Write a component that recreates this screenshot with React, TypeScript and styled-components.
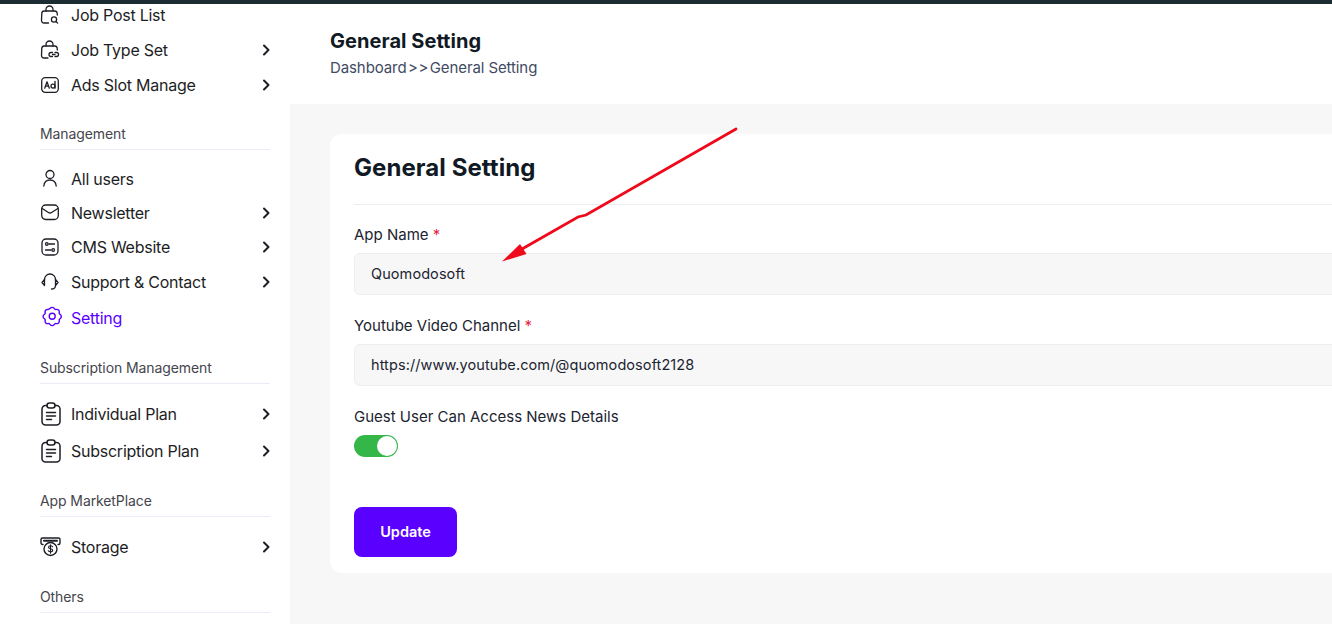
import * as React from 'react'
import styled, { createGlobalStyle } from 'styled-components'

const GlobalStyle = createGlobalStyle`
  html, body {
    margin: 0;
    padding: 0;
    height: 100%;
    overflow: hidden;
    background: #fff;
    font-family: Inter, "Noto Sans", sans-serif;
  }
  * { box-sizing: border-box; }
`

const iconProps = {
  width: 20,
  height: 20,
  viewBox: '0 0 20 20',
  fill: 'none',
  stroke: 'currentColor',
  strokeWidth: 1.3,
  strokeLinecap: 'round' as const,
  strokeLinejoin: 'round' as const
}

const BagSearch = () => (
  <svg {...iconProps}>
    <path d="M8.5 18H4a2.5 2.5 0 0 1-2.5-2.6l.3-7A2.5 2.5 0 0 1 4.300 6h10.400a2.500 2.500 0 0 1 2.500 2.300l.1 1.700" />
    <path d="M6 6V4.500a3.500 3.500 0 0 1 7 0V6" />
    <circle cx="14" cy="14.500" r="2.600" />
    <path d="M16 16.500l1.600 1.600" />
  </svg>
)

const BagLink = () => (
  <svg {...iconProps}>
    <path d="M8 18H4a2.500 2.500 0 0 1-2.500-2.600l.3-7A2.500 2.500 0 0 1 4.300 6h10.400a2.500 2.500 0 0 1 2.500 2.300l.1 1.700" />
    <path d="M6 6V4.500a3.500 3.500 0 0 1 7 0V6" />
    <path d="M12.500 12.500h-1.500a2 2 0 0 0 0 4h1.500M15 12.500h1.500a2 2 0 0 1 0 4H15M12.500 14.500H15" />
  </svg>
)

const AdsIcon = () => (
  <svg {...iconProps}>
    <rect x="1.700" y="2.700" width="16.600" height="14.600" rx="3.500" />
    <path d="M4.700 13.200L7 6.800l2.300 6.400M5.500 11.200h3" />
    <path d="M15 6.500v6.700" />
    <circle cx="13" cy="11.100" r="2" />
  </svg>
)

const UserIcon = () => (
  <svg {...iconProps}>
    <circle cx="10" cy="5.500" r="4" />
    <path d="M3.800 17c.4-3.800 2.800-6 6.200-6s5.800 2.200 6.200 6" />
  </svg>
)

const MailIcon = () => (
  <svg {...iconProps}>
    <rect x="1.700" y="2" width="16.600" height="14.500" rx="4" />
    <path d="M2.200 5.500l6.200 4a3 3 0 0 0 3.200 0l6.200-4" />
  </svg>
)

const SlidersIcon = () => (
  <svg {...iconProps}>
    <rect x="2" y="2" width="16" height="16" rx="4" />
    <path d="M9 7h5.500M5.500 13H11" />
    <circle cx="6.800" cy="7" r="1.300" />
    <circle cx="13.200" cy="13" r="1.300" />
  </svg>
)

const HeadsetIcon = () => (
  <svg {...iconProps}>
    <path d="M4.500 8V7.500a5.500 5.500 0 0 1 11 0V8" />
    <path d="M4.500 7.500L2 10.500 4.500 13.500zM15.500 7.500L18 10.500 15.500 13.500z" />
    <path d="M15.500 13.500c0 2.300-1.500 3.500-4 3.500" />
  </svg>
)

const GearIcon = () => (
  <svg {...iconProps} viewBox="-2.200 1.800 20 20" strokeWidth={1.4}>
    <path d="M8 2.200a2.500 2.500 0 0 1 4 0l.4.500a1.500 1.500 0 0 0 1.200.6l.7-.1a2.500 2.500 0 0 1 2.800 2.800l-.1.700a1.500 1.500 0 0 0 .6 1.200l.5.400a2.500 2.500 0 0 1 0 4l-.5.400a1.500 1.500 0 0 0-.6 1.200l.1.700a2.500 2.500 0 0 1-2.800 2.800l-.7-.1a1.500 1.500 0 0 0-1.200.6l-.4.500a2.500 2.500 0 0 1-4 0l-.4-.5a1.500 1.500 0 0 0-1.200-.6l-.7.1a2.500 2.500 0 0 1-2.800-2.800l.1-.7a1.500 1.500 0 0 0-.6-1.200l-.5-.4a2.500 2.500 0 0 1 0-4l.5-.4a1.500 1.500 0 0 0 .6-1.200l-.1-.7A2.500 2.500 0 0 1 5 3.200l.7.100a1.500 1.500 0 0 0 1.200-.6z" />
    <circle cx="10" cy="10" r="3" />
  </svg>
)

const ClipboardIcon = () => (
  <svg width="22" height="24" viewBox="0 0 22 24" fill="none" stroke="currentColor" strokeWidth="1.500" strokeLinecap="round" strokeLinejoin="round">
    <path d="M7 3.500H5.500A3.500 3.500 0 0 0 2 7v12.500A3.500 3.500 0 0 0 5.500 23h11a3.500 3.500 0 0 0 3.500-3.500V7a3.500 3.500 0 0 0-3.500-3.500H15" />
    <rect x="7" y="1" width="8" height="5" rx="2.500" />
    <path d="M6.500 10.500h9M6.500 14h9M6.500 17.500h5" />
  </svg>
)

const StorageIcon = () => (
  <svg width="22" height="22" viewBox="0 0 22 22" fill="none" stroke="currentColor" strokeWidth="1.400" strokeLinecap="round" strokeLinejoin="round">
    <path d="M3 8.500H2.500A1.500 1.500 0 0 1 1 7V3.500A1.500 1.500 0 0 1 2.500 2h16A1.500 1.500 0 0 1 20 3.500V7a1.500 1.500 0 0 1-1.500 1.500H18" />
    <path d="M4 4.800h13" strokeWidth="2" />
    <circle cx="10.500" cy="13" r="6.500" />
    <path d="M12.500 10.800c-.4-.7-1.100-1-2-1-1.200 0-2 .6-2 1.500 0 2 4.200 1 4.200 3 0 .9-.9 1.500-2.200 1.500-1 0-1.800-.4-2.200-1.100M10.500 8.800v8.400" strokeWidth="1.100" />
  </svg>
)

const ChevronIcon = () => (
  <svg width="8" height="12" viewBox="0 0 8 12" fill="none" stroke="currentColor" strokeWidth="2" strokeLinecap="round" strokeLinejoin="round">
    <path d="M2 1.500L6.500 6 2 10.500" />
  </svg>
)

const TopBar = styled.div`
  height: 4px;
  background: #1d2b33;
`

const Page = styled.div`
  display: flex;
  height: 620px;
  overflow: hidden;
`

const Sidebar = styled.aside`
  width: 290px;
  flex-shrink: 0;
  overflow: hidden;
  background: #fff;
  padding: 0 20px 0 40px;
`

const NavList = styled.nav`
  margin-top: -7px;
  display: flex;
  flex-direction: column;
`

const SectionLabel = styled.div`
  margin-top: 21px;
  padding-bottom: 4px;
  border-bottom: 1px solid #ecebfa;
  margin-bottom: 12px;
  font-size: 14px;
  line-height: 22px;
  color: #45454c;
  letter-spacing: -0.1px;
`

const NavRow = styled.div<{ $height: number; $active?: boolean }>`
  display: flex;
  align-items: center;
  height: ${p => p.$height}px;
  color: ${p => (p.$active ? '#5a00ff' : '#1d1e25')};
  font-size: 16px;
`

const NavIcon = styled.span`
  width: 31px;
  display: flex;
  align-items: center;
  flex-shrink: 0;

  svg {
    overflow: visible;
  }
`

const NavText = styled.span`
  flex: 1;
  letter-spacing: -0.25px;
`

const NavArrow = styled.span`
  display: flex;
  color: #1d1e25;
`

const Main = styled.main`
  position: relative;
  flex: 1;
  min-width: 0;
  overflow: hidden;
  background: #f7f7f8;
`

const Header = styled.header`
  height: 100px;
  background: #fff;
  padding: 22px 0 0 40px;
`

const HeaderTitle = styled.h1`
  margin: 0;
  font-size: 20px;
  line-height: 30px;
  font-weight: 700;
  color: #111a24;
  letter-spacing: 0.05px;
`

const Crumbs = styled.div`
  display: flex;
  gap: 1.500px;
  margin-top: 1px;
  font-size: 15px;
  line-height: 22px;
  color: #3f4a63;
  letter-spacing: -0.1px;
`

const CrumbSeparator = styled.span`
  word-spacing: -3.500px;
`

const Content = styled.div`
  padding: 30px 0 0 40px;
`

const Card = styled.section`
  width: 1200px;
  height: 439px;
  background: #fff;
  border-radius: 12px;
  padding: 0 0 0 24px;
`

const CardTitle = styled.h2`
  margin: 0 0 -1px;
  height: 71px;
  display: flex;
  align-items: center;
  font-size: 24px;
  font-weight: 700;
  color: #111a24;
  letter-spacing: 0.07px;
  border-bottom: 1px solid #ededf0;
  padding-bottom: 4px;
`

const Field = styled.div`
  margin-top: 20px;
`

const Label = styled.label`
  display: block;
  font-size: 15px;
  line-height: 22px;
  color: #1b2430;
  margin-bottom: 7px;
`

const Required = styled.span`
  color: #e5243f;
`

const InputBox = styled.div`
  height: 42px;
  display: flex;
  align-items: center;
  padding: 0 0 2px 16px;
  background: #f7f7f8;
  border: 1px solid #ededf0;
  border-radius: 6px;
  font-size: 14.500px;
  letter-spacing: 0.08px;
  color: #1b2430;
`

const Toggle = styled.div`
  display: flex;
  justify-content: flex-end;
  align-items: center;
  width: 44px;
  height: 22px;
  padding: 1px;
  border-radius: 11px;
  background: #34b649;
`

const Knob = styled.span`
  width: 20px;
  height: 20px;
  border-radius: 50%;
  background: #fff;
`

const Button = styled.button`
  display: block;
  margin-top: 50px;
  width: 103px;
  height: 50px;
  padding: 0 0 2px;
  border: 0;
  border-radius: 8px;
  background: #5a00ff;
  color: #fff;
  font: 600 14.500px Inter, "Noto Sans", sans-serif;
`

const Annotation = styled.svg`
  position: absolute;
  left: -290px;
  top: -4px;
  pointer-events: none;
`

type Item = { label: string; icon: React.ReactNode; height: number; arrow?: boolean; active?: boolean }

const groups: { title?: string; items: Item[] }[] = [
  {
    items: [
      { label: 'Job Post List', icon: <BagSearch />, height: 35 },
      { label: 'Job Type Set', icon: <BagLink />, height: 35, arrow: true },
      { label: 'Ads Slot Manage', icon: <AdsIcon />, height: 35, arrow: true }
    ]
  },
  {
    title: 'Management',
    items: [
      { label: 'All users', icon: <UserIcon />, height: 34 },
      { label: 'Newsletter', icon: <MailIcon />, height: 34, arrow: true },
      { label: 'CMS Website', icon: <SlidersIcon />, height: 34, arrow: true },
      { label: 'Support & Contact', icon: <HeadsetIcon />, height: 35, arrow: true },
      { label: 'Setting', icon: <GearIcon />, height: 37, active: true }
    ]
  },
  {
    title: 'Subscription Management',
    items: [
      { label: 'Individual Plan', icon: <ClipboardIcon />, height: 36, arrow: true },
      { label: 'Subscription Plan', icon: <ClipboardIcon />, height: 37, arrow: true }
    ]
  },
  {
    title: 'App MarketPlace',
    items: [{ label: 'Storage', icon: <StorageIcon />, height: 36, arrow: true }]
  },
  { title: 'Others', items: [] }
]

export default function App() {
  return (
    <>
      <GlobalStyle />
      <TopBar />
      <Page>
        <Sidebar>
          <NavList>
            {groups.map((group, i) => (
              <React.Fragment key={i}>
                {group.title && <SectionLabel>{group.title}</SectionLabel>}
                {group.items.map(item => (
                  <NavRow key={item.label} $height={item.height} $active={item.active}>
                    <NavIcon>{item.icon}</NavIcon>
                    <NavText>{item.label}</NavText>
                    {item.arrow && (
                      <NavArrow>
                        <ChevronIcon />
                      </NavArrow>
                    )}
                  </NavRow>
                ))}
              </React.Fragment>
            ))}
          </NavList>
        </Sidebar>
        <Main>
          <Header>
            <HeaderTitle>General Setting</HeaderTitle>
            <Crumbs>
              <span>Dashboard</span>
              <CrumbSeparator>&gt; &gt;</CrumbSeparator>
              <span>General Setting</span>
            </Crumbs>
          </Header>
          <Content>
            <Card>
              <CardTitle>General Setting</CardTitle>
              <Field>
                <Label>
                  App Name <Required>*</Required>
                </Label>
                <InputBox>Quomodosoft</InputBox>
              </Field>
              <Field>
                <Label>
                  Youtube Video Channel <Required>*</Required>
                </Label>
                <InputBox>https://www.youtube.com/@quomodosoft2128</InputBox>
              </Field>
              <Field>
                <Label>Guest User Can Access News Details</Label>
                <Toggle>
                  <Knob />
                </Toggle>
              </Field>
              <Button>Update</Button>
            </Card>
          </Content>
          <Annotation width="1332" height="624" viewBox="0 0 1332 624">
            <path d="M736 129L586 215L578 217L522 249" stroke="#ee0a1a" strokeWidth="2.800" fill="none" strokeLinecap="round" />
            <path d="M502 261.500L520 244L526.500 254Z" fill="#ee0a1a" />
          </Annotation>
        </Main>
      </Page>
    </>
  )
}
